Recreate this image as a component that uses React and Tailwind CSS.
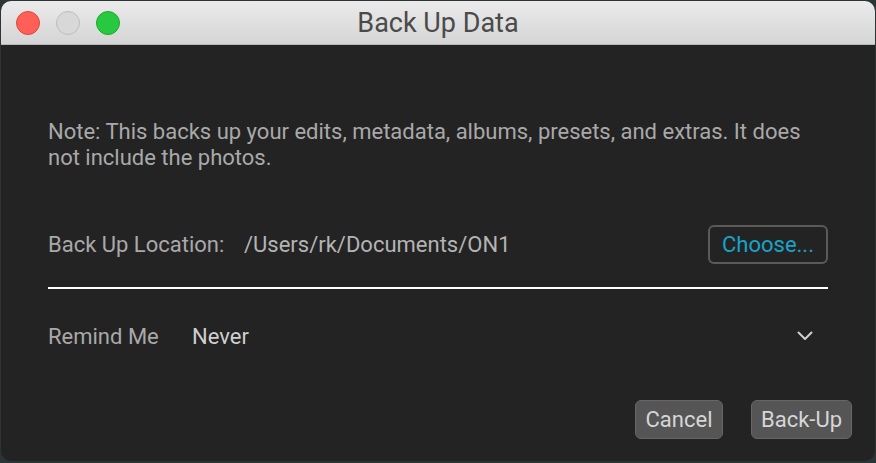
export default function App() {
  return (
    <div className="w-[876px] h-[463px] bg-[#2b3535] p-px pb-[2px] font-['Roboto',sans-serif]">
      <div className="w-full h-full rounded-[10px] overflow-hidden bg-[#232323] flex flex-col">
        {/* title bar */}
        <div className="h-[44px] shrink-0 relative flex items-center justify-center bg-gradient-to-b from-[#ebebeb] to-[#d5d5d5] border-b border-[#b8b8b8]">
          <div className="absolute left-[15px] top-[10px] flex gap-[16px]">
            <div className="w-[24px] h-[24px] rounded-full bg-[#fe5f57] border border-[#e0443e]" />
            <div className="w-[24px] h-[24px] rounded-full bg-[#d8d8d8] border border-[#bdbdbd]" />
            <div className="w-[24px] h-[24px] rounded-full bg-[#28c840] border border-[#1aab29]" />
          </div>
          <span className="text-[27px] text-[#4a4a4a] leading-none mt-[2px]">Back Up Data</span>
        </div>

        {/* body */}
        <div className="flex-1 flex flex-col px-[47px] pt-[74px]">
          <p className="text-[22px] leading-[26px] text-[#a9a9a9] w-[780px]">
            Note: This backs up your edits, metadata, albums, presets, and extras. It does not include the photos.
          </p>

          <div className="mt-[53px] flex items-center h-[40px] w-[780px]">
            <span className="text-[22px] text-[#a9a9a9] w-[196px]">Back Up Location:</span>
            <span className="text-[22px] text-[#b4b4b4]">/Users/rk/Documents/ON1</span>
            <button className="ml-auto w-[120px] h-[39px] rounded-[6px] border-2 border-[#5a5a5a] text-[22px] text-[#19a3c9] flex items-center justify-center">
              Choose...
            </button>
          </div>

          <div className="mt-[23px] h-[2px] bg-white w-[780px]" />

          <div className="mt-[34px] flex items-center h-[26px] w-[780px]">
            <span className="text-[22px] text-[#a9a9a9] w-[144px]">Remind Me</span>
            <span className="text-[22px] text-[#cfcfcf]">Never</span>
            <svg className="ml-auto mr-[15px]" width="16" height="10" viewBox="0 0 16 10" fill="none">
              <path d="M1.5 1.5 L8 8 L14.5 1.5" stroke="#d0d0d0" strokeWidth="2" strokeLinecap="round" strokeLinejoin="round" />
            </svg>
          </div>

          <div className="mt-[51px] flex justify-end gap-[28px] mr-[-24px]">
            <button className="w-[88px] h-[39px] rounded-[6px] bg-[#555555] border border-[#666] text-[22px] text-[#d6d6d6] flex items-center justify-center">
              Cancel
            </button>
            <button className="w-[101px] h-[39px] rounded-[6px] bg-[#555555] border border-[#666] text-[22px] text-[#d6d6d6] flex items-center justify-center">
              Back-Up
            </button>
          </div>
        </div>
      </div>
    </div>
  );
}
